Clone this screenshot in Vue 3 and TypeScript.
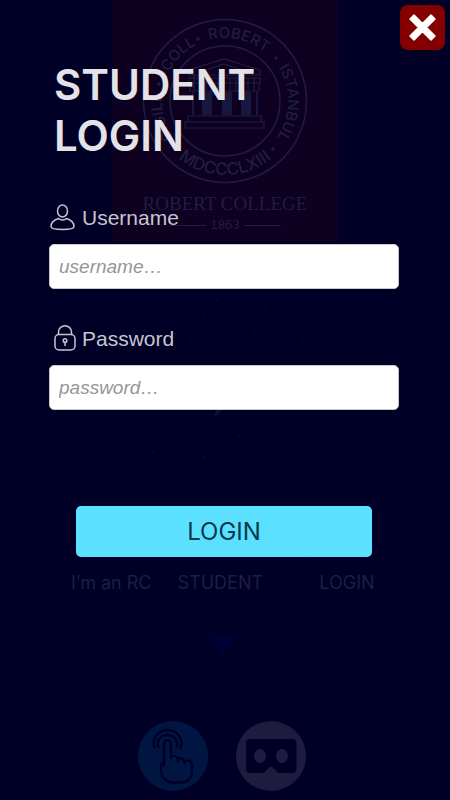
<script setup lang="ts">
import { ref } from 'vue'

interface Star {
  x: number
  y: number
}

const username = ref('')
const password = ref('')
const submitted = ref(false)

const stars: Star[] = [
  { x: 218, y: 58 },
  { x: 204, y: 72 },
  { x: 265, y: 65 },
  { x: 254, y: 89 },
  { x: 190, y: 100 },
  { x: 302, y: 100 },
  { x: 173, y: 193 },
  { x: 238, y: 194 },
  { x: 267, y: 203 },
  { x: 304, y: 201 },
  { x: 154, y: 210 },
  { x: 204, y: 215 },
  { x: 253, y: 240 },
]

function login(): void {
  submitted.value = username.value !== '' && password.value !== ''
}
</script>

<template>
  <div class="page">
    <div class="backdrop" inert>
      <section class="crest">
        <svg class="seal" viewBox="0 0 166 166" aria-hidden="true">
          <defs>
            <path id="ring-top" d="M83 146a63 63 0 0 1 0-126a63 63 0 0 1 0 126" />
            <path id="ring-bottom" d="M9 83a74 74 0 0 0 148 0" />
          </defs>
          <g fill="none" stroke="currentColor" stroke-width="1.500">
            <circle cx="83" cy="83" r="81.5" />
            <circle cx="83" cy="83" r="55" />
          </g>
          <g class="ring-text" fill="currentColor" text-anchor="middle">
            <text><textPath href="#ring-top" startOffset="21%">SIGILL</textPath></text>
            <text><textPath href="#ring-top" startOffset="37.5%">COLL</textPath></text>
            <text><textPath href="#ring-top" startOffset="53.5%">ROBERT</textPath></text>
            <text><textPath href="#ring-top" startOffset="75.5%">ISTANBUL</textPath></text>
            <text class="ring-year"><textPath href="#ring-bottom" startOffset="50%">MDCCCLXIII</textPath></text>
            <circle cx="56" cy="21" r="1.800" />
            <circle cx="134" cy="40" r="1.800" />
            <circle cx="131" cy="131" r="1.800" />
            <circle cx="17" cy="66" r="1.800" />
            <circle cx="33" cy="129" r="1.800" />
          </g>
          <g fill="none" stroke="currentColor" stroke-width="1.2">
            <path d="M47 57v-5l35-11 36 11v5zM56 55l26-9 27 9M47 60h71v5h-71zM48 65h69v8h-69zM52 57v16M58 60v13M64 60v13M70 60v13M76 60v13M82 60v13M88 60v13M94 60v13M100 60v13M106 60v13M112 60v13" />
            <path d="M46 98h73v6h-73zM43 104h79v6h-79z" />
          </g>
          <path class="columns" d="M50 74h2v23h-2zM60 74h10v23h-10zM80 74h10v23h-10zM99 74h10v23h-10zM114 74h2v23h-2z" />
        </svg>
        <p class="college">ROBERT COLLEGE</p>
        <p class="founded"><span>1863</span></p>
      </section>

      <svg class="sky" viewBox="0 0 450 308" preserveAspectRatio="xMidYMin meet" aria-hidden="true">
        <circle v-for="(star, i) in stars" :key="i" :cx="star.x" :cy="star.y" r="1.5" fill="#060630" />
        <path d="M214 176l10-10v-2h-7z" fill="#0e0e3e" />
      </svg>

      <nav class="links">
        <a href="#rc">I’m an RC</a>
        <a href="#student">STUDENT</a>
        <button type="button" class="open-login">LOGIN</button>
      </nav>

      <svg class="arrow" viewBox="0 0 28 26" aria-hidden="true">
        <path d="M0 0l9 5 5 1 5-1 9-5-6 14-4 4-4 8-4-8-4-4z" fill="#000036" />
      </svg>

      <div class="modes">
        <button type="button" class="mode touch" aria-label="Touch mode">
          <svg viewBox="0 0 70 70" aria-hidden="true">
            <g fill="none" stroke="#000026" stroke-width="2.300" stroke-linecap="round" stroke-linejoin="round">
              <path d="M16.500 27c-3-9 3-17.500 12.500-18c10-.5 17 9 13.500 18" />
              <path d="M20.500 26c-2.500-6 2-12 8.500-12s11.500 6 9.500 12" />
              <path d="M26 45V23c0-5 7-5 7 0v14c1-3 6-3 7 1.500c2-2.500 6-1 6.500 2c3-2 7-.5 7.500 3v7c0 7-5 11-11 11h-7c-8 0-13-5-13-12v-4c0-2 1.500-4 3-4.500M40 38.500v2M46.500 40.500v2" />
            </g>
          </svg>
        </button>
        <button type="button" class="mode headset" aria-label="Headset mode">
          <svg viewBox="0 0 70 70" aria-hidden="true">
            <path fill="#000026" fill-rule="evenodd" d="M14 18h42.500q4 0 4 4v26q0 4-4 4H42l-5-5.500q-2-1.500-4 0L28 52H14q-4 0-4-4V22q0-4 4-4zM24 28a6 7 0 0 0 0 14a6 7 0 0 0 0-14zM46 28a6 7 0 0 0 0 14a6 7 0 0 0 0-14z" />
          </svg>
        </button>
      </div>
    </div>

    <div class="overlay" role="dialog" aria-labelledby="login-title">
      <button type="button" class="close" aria-label="Close">
        <svg viewBox="0 0 45 45" aria-hidden="true">
          <path d="M14 11l8.500 8.500L31 11l4 4-8.500 8.500L35 32l-4 4-8.500-8.500L14 36l-4-4 8.500-8.500L10 15z" transform="translate(0 -1)" fill="#fff" stroke="#fff" stroke-width="1.500" stroke-linejoin="round" />
        </svg>
      </button>

      <form class="form" @submit.prevent="login">
        <h1 id="login-title">STUDENT<br />LOGIN</h1>

        <div class="field">
          <label for="username">
            <svg viewBox="0 0 28 28" aria-hidden="true">
              <g fill="none" stroke="currentColor" stroke-width="1.5">
                <ellipse cx="13.500" cy="7" rx="5" ry="6" />
                <path d="M9.500 14.500C5 16 2 19 2 22.500c0 4 23 4 23 0c0-3.500-3-6.500-7.500-8c-2 2-6 2-8 0z" />
              </g>
            </svg>
            Username
          </label>
          <input id="username" v-model="username" type="text" placeholder="username…" autocomplete="username" />
        </div>

        <div class="field">
          <label for="password">
            <svg viewBox="0 0 28 28" aria-hidden="true">
              <g fill="none" stroke="currentColor" stroke-width="1.500">
                <rect x="6" y="9.500" width="20" height="15.500" rx="4" />
                <path d="M9.500 9.500V7a6.500 6.200 0 0 1 13 0v2.500" />
                <circle cx="16" cy="15.500" r="1.800" />
                <path d="M16 17.500v3.500" />
              </g>
            </svg>
            Password
          </label>
          <input id="password" v-model="password" type="password" placeholder="password…" autocomplete="current-password" />
        </div>

        <button type="submit" class="submit">LOGIN</button>
      </form>
    </div>
  </div>
</template>

<style>
body {
  margin: 0;
  background: #000026;
}
</style>

<style scoped>
.page {
  position: relative;
  min-height: 100vh;
  background: #000026;
  font-family: "Liberation Sans", Arial, sans-serif;
}

button {
  padding: 0;
  border: 0;
  cursor: pointer;
}

.backdrop {
  display: flex;
  flex-direction: column;
  min-height: 100vh;
  color: #1f1e40;
}

.crest {
  display: flex;
  flex-direction: column;
  align-items: center;
  align-self: center;
  box-sizing: border-box;
  width: 50%;
  min-width: 226px;
  padding: 18px 0 8px;
  background: #0d0020;
}

.seal {
  width: 166px;
  height: 166px;
}

.ring-text {
  font-family: Inter, "Liberation Sans", sans-serif;
  font-size: 15px;
  font-weight: 500;
}

.ring-year {
  font-size: 17px;
}

.columns {
  fill: #16183f;
}

.college {
  margin: 8px 0 0;
  font-family: "Liberation Serif", "Times New Roman", serif;
  font-size: 19px;
  line-height: 24px;
  white-space: nowrap;
}

.founded {
  display: flex;
  align-items: center;
  gap: 5px;
  margin: 0;
  font-family: "Liberation Sans Narrow", "Liberation Sans", sans-serif;
  font-size: 13px;
  line-height: 18px;
}

.founded::before,
.founded::after {
  content: "";
  width: 37px;
  height: 1px;
  background: currentColor;
}

.sky {
  flex: 1 0 240px;
  width: 100%;
  min-height: 0;
}

.links {
  display: flex;
  align-items: center;
  gap: 26px;
  padding: 0 61px 0 71px;
  font-family: Inter, "Open Sans", sans-serif;
  font-size: 18px;
  line-height: 24px;
  white-space: nowrap;
}

.links a {
  color: inherit;
  text-decoration: none;
}

.open-login {
  width: 84px;
  height: 64px;
  margin-left: auto;
  border: 1px solid #050024;
  border-radius: 8px;
  background: transparent;
  color: inherit;
  font: inherit;
}

.arrow {
  align-self: center;
  width: 28px;
  height: 26px;
  margin: 16px 6px 64px 0;
}

.modes {
  display: flex;
  justify-content: center;
  gap: 28px;
  margin: 0 6px 9px 0;
}

.mode {
  width: 70px;
  height: 70px;
  border-radius: 50%;
}

.mode svg,
.close svg {
  display: block;
  width: 100%;
  height: 100%;
}

.touch {
  background: #001541;
}

.headset {
  background: #1d1b3e;
}

.overlay {
  position: absolute;
  inset: 0;
}

.close {
  position: absolute;
  top: 5px;
  right: 5px;
  width: 45px;
  height: 45px;
  border-radius: 8px;
  background: #840000;
}

.form {
  display: flex;
  flex-direction: column;
  gap: 36px;
  padding: 59px 51px 0 49px;
}

h1 {
  margin: 0 0 7px 5px;
  color: #e3e2e6;
  font-family: Inter, "Open Sans", sans-serif;
  font-size: 42px;
  font-weight: 600;
  line-height: 51px;
}

.field {
  display: flex;
  flex-direction: column;
  gap: 12px;
}

label {
  display: flex;
  align-items: center;
  gap: 5px;
  color: #c6c5ce;
  font-size: 21px;
  line-height: 28px;
}

label svg {
  width: 28px;
  height: 28px;
}

input {
  box-sizing: border-box;
  width: 100%;
  height: 45px;
  padding: 0 9px;
  border: 1px solid #c9c9c9;
  border-radius: 5px;
  background: #fff;
  color: #222;
  font-family: inherit;
  font-size: 19px;
}

input::placeholder {
  color: #969696;
  font-style: italic;
  opacity: 1;
}

.submit {
  height: 51px;
  margin: 60px 27px 0;
  border-radius: 5px;
  background: #5ce0ff;
  color: #073b4c;
  font-family: Inter, "Open Sans", sans-serif;
  font-size: 24px;
}
</style>
